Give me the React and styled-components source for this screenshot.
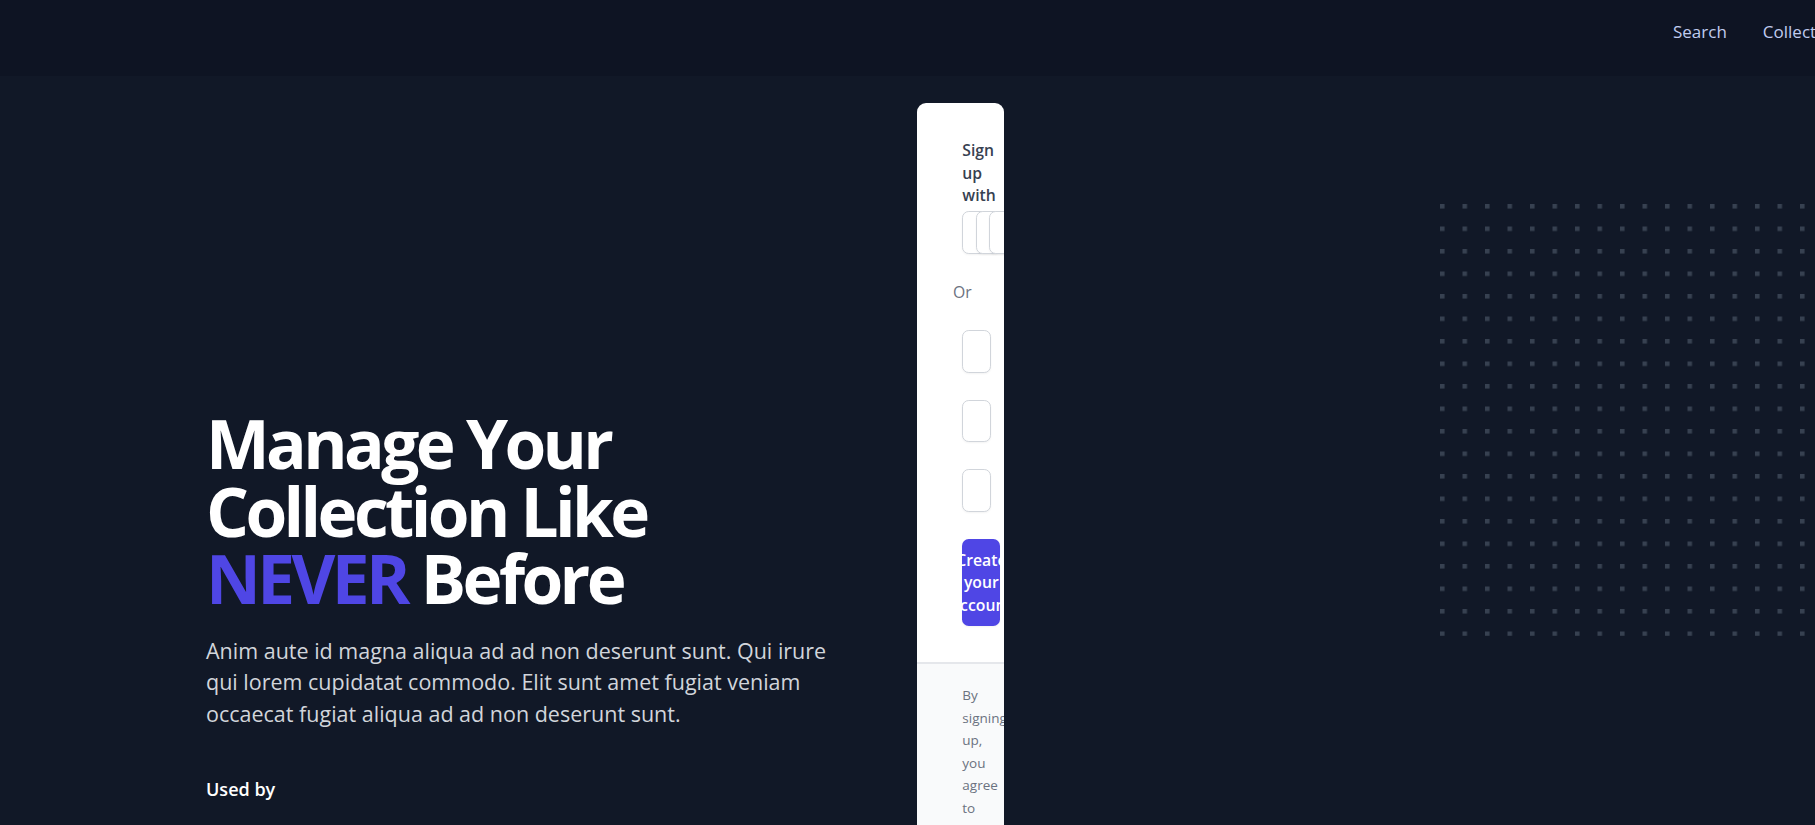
import React from 'react';
import styled, { createGlobalStyle } from 'styled-components';

const GlobalStyle = createGlobalStyle`
  html, body {
    margin: 0;
    padding: 0;
    background: #111827;
    overflow: hidden;
  }
  body {
    font-family: "Open Sans", "Noto Sans", sans-serif;
    -webkit-font-smoothing: antialiased;
  }
  *, *::before, *::after { box-sizing: border-box; }
`;

const Page = styled.div`
  position: relative;
  width: 100%;
  min-height: 825px;
  background: #111827;
  overflow: hidden;
`;

const NavBar = styled.header`
  height: 76px;
  background: #0e1423;
  display: grid;
  grid-template-columns: 1673px max-content;
  align-items: start;
  padding-top: 20px;
`;

const NavLinks = styled.nav`
  grid-column: 2;
  display: flex;
  gap: 36px;
  white-space: nowrap;
`;

const NavLink = styled.a`
  font-size: 17px;
  line-height: 24px;
  color: #c0ccef;
  text-decoration: none;
`;

const Hero = styled.main`
  position: relative;
  display: flex;
  align-items: flex-start;
  padding: 27px 0 0 206px;
`;

const HeroText = styled.div`
  flex: 0 0 711.3px;
  margin-top: 307.4px;
`;

const Title = styled.h1`
  margin: 0;
  font-size: 67.5px;
  line-height: 67.5px;
  font-weight: 700;
  letter-spacing: -3.6px;
  color: #ffffff;
`;

const TitleLine = styled.span`
  display: block;
`;

const Accent = styled.span`
  color: #4f46e5;
`;

const Lead = styled.p`
  margin: 22px 0 0;
  max-width: 645px;
  font-size: 21.5px;
  line-height: 31.5px;
  color: #d1d5db;
`;

const UsedBy = styled.p`
  margin: 47px 0 0;
  font-size: 18px;
  line-height: 27px;
  font-weight: 600;
  color: #ffffff;
`;

const Card = styled.section`
  flex: 0 0 87px;
  width: 87px;
  background: #ffffff;
  border-radius: 9px;
  overflow: hidden;
`;

const CardBody = styled.div`
  padding: 36px 45px;
`;

const CardLabel = styled.p`
  margin: 0;
  font-size: 15.75px;
  line-height: 22.5px;
  font-weight: 600;
  color: #374151;
`;

const SocialGrid = styled.div`
  margin-top: 4.5px;
  display: grid;
  grid-template-columns: repeat(3, minmax(0, 1fr));
  gap: 13.5px;
`;

const SocialButton = styled.a`
  display: inline-flex;
  justify-content: center;
  width: 100%;
  height: 42.5px;
  padding: 9px 18px;
  border: 1px solid #d1d5db;
  border-radius: 6.75px;
  background: #ffffff;
  box-shadow: 0 1px 2px rgba(0, 0, 0, 0.05);
`;

const SrOnly = styled.span`
  position: absolute;
  width: 1px;
  height: 1px;
  padding: 0;
  margin: -1px;
  overflow: hidden;
  clip: rect(0, 0, 0, 0);
  white-space: nowrap;
  border: 0;
`;

const Divider = styled.div`
  margin-top: 27px;
  display: flex;
  justify-content: center;
  font-size: 15.75px;
  line-height: 22.5px;
`;

const DividerText = styled.span`
  padding: 0 9px;
  background: #ffffff;
  color: #6b7280;
`;

const Form = styled.form`
  margin-top: 27px;
  display: flex;
  flex-direction: column;
  gap: 27px;
`;

const Input = styled.input`
  display: block;
  width: 100%;
  padding: 9px 13.5px;
  border: 1px solid #d1d5db;
  border-radius: 6.75px;
  font-family: inherit;
  font-size: 15.75px;
  line-height: 22.5px;
  box-shadow: 0 1px 2px rgba(0, 0, 0, 0.05);
  outline: none;
`;

const SubmitButton = styled.button`
  display: flex;
  justify-content: center;
  width: 100%;
  padding: 9px 18px;
  border: 1px solid transparent;
  border-radius: 6.75px;
  background: #4f46e5;
  color: #ffffff;
  font-family: inherit;
  font-size: 15.75px;
  line-height: 22.5px;
  font-weight: 600;
  box-shadow: 0 1px 2px rgba(0, 0, 0, 0.05);
`;

const CardFooter = styled.div`
  padding: 20px 45px 27px;
  background: #f9fafb;
  border-top: 2.25px solid #e5e7eb;
`;

const Terms = styled.p`
  margin: 0;
  font-size: 13.5px;
  line-height: 22.5px;
  color: #6b7280;
`;

const TermsLink = styled.a`
  font-weight: 500;
  color: #111827;
  text-decoration: none;
`;

const DotPattern = styled.svg`
  position: absolute;
  left: 1440px;
  top: 128.3px;
`;

export default function App() {
  return (
    <>
      <GlobalStyle />
      <Page>
        <NavBar>
          <NavLinks>
            <NavLink href="#">Search</NavLink>
            <NavLink href="#">Collections</NavLink>
            <NavLink href="#">Sign in</NavLink>
          </NavLinks>
        </NavBar>
        <Hero>
          <DotPattern width="454.5" height="432" viewBox="0 0 404 384" fill="none" aria-hidden="true">
            <defs>
              <pattern id="dot-grid" x="0" y="0" width="20" height="20" patternUnits="userSpaceOnUse">
                <rect x="0" y="0" width="4" height="4" fill="#374151" />
              </pattern>
            </defs>
            <rect width="404" height="384" fill="url(#dot-grid)" />
          </DotPattern>
          <HeroText>
            <Title>
              <TitleLine>Manage Your</TitleLine>
              <TitleLine>Collection Like</TitleLine>
              <TitleLine><Accent>NEVER</Accent> Before</TitleLine>
            </Title>
            <Lead>
              Anim aute id magna aliqua ad ad non deserunt sunt. Qui irure qui lorem cupidatat commodo. Elit sunt amet fugiat veniam occaecat fugiat aliqua ad ad non deserunt sunt.
            </Lead>
            <UsedBy>Used by</UsedBy>
          </HeroText>
          <Card>
            <CardBody>
              <CardLabel>Sign up with</CardLabel>
              <SocialGrid>
                <SocialButton href="#"><SrOnly>Sign up with Facebook</SrOnly></SocialButton>
                <SocialButton href="#"><SrOnly>Sign up with Twitter</SrOnly></SocialButton>
                <SocialButton href="#"><SrOnly>Sign up with GitHub</SrOnly></SocialButton>
              </SocialGrid>
              <Divider><DividerText>Or</DividerText></Divider>
              <Form onSubmit={(e) => e.preventDefault()}>
                <Input type="text" aria-label="Name" />
                <Input type="text" aria-label="Mobile number or email" />
                <Input type="password" aria-label="Password" />
                <SubmitButton type="submit">Create your account</SubmitButton>
              </Form>
            </CardBody>
            <CardFooter>
              <Terms>
                By signing up, you agree to our <TermsLink href="#">Terms</TermsLink>, <TermsLink href="#">Data Policy</TermsLink> and <TermsLink href="#">Cookies Policy</TermsLink>.
              </Terms>
            </CardFooter>
          </Card>
        </Hero>
      </Page>
    </>
  );
}
